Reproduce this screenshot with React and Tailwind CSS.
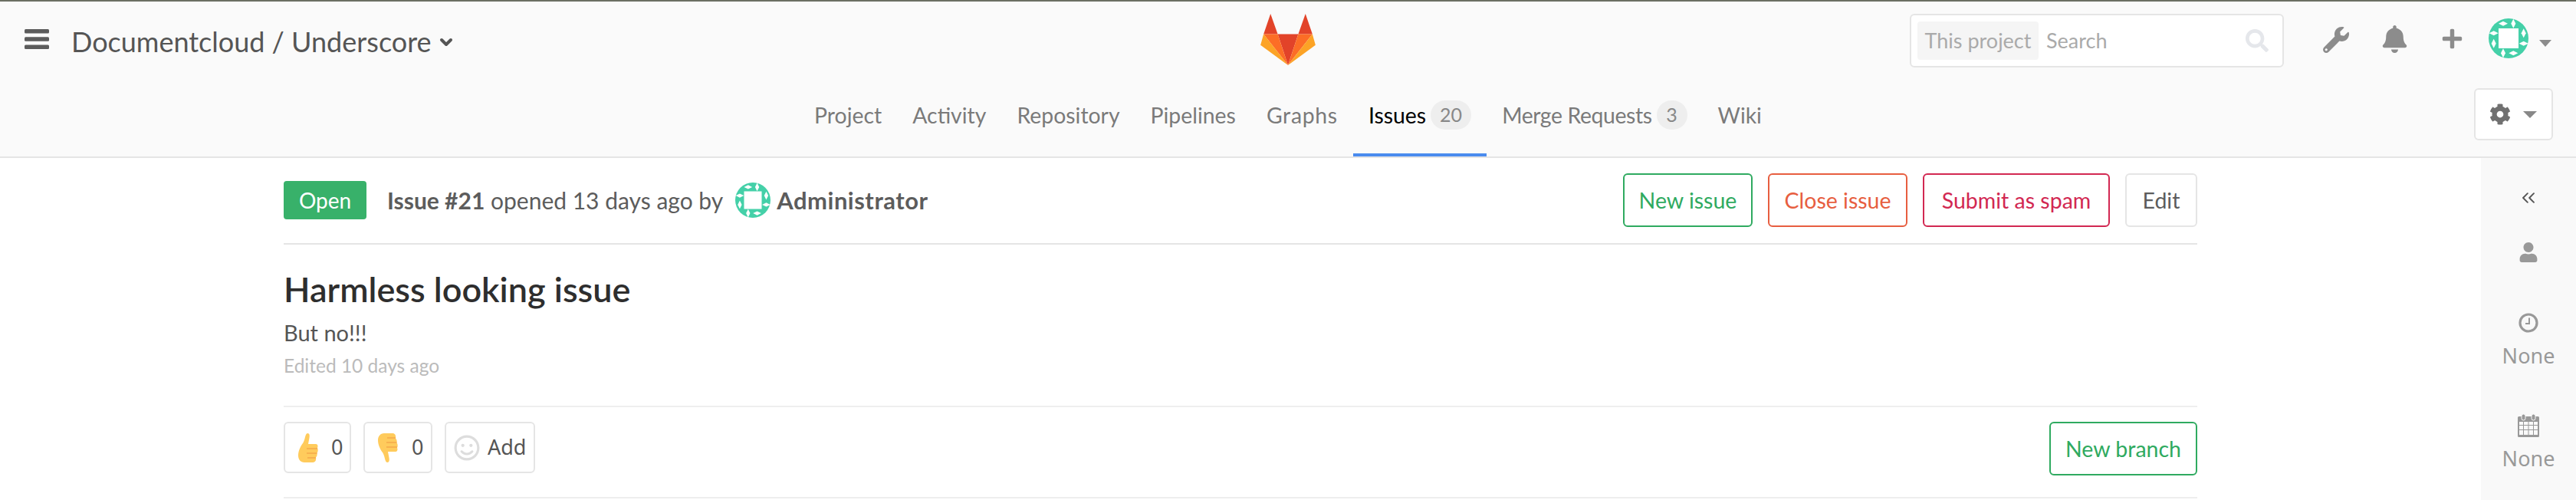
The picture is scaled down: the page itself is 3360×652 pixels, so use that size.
import { ChevronDown, ChevronsLeft } from 'lucide-react'
import { FaCog, FaUser, FaWrench, FaBell, FaPlus, FaSearch, FaRegSmile } from 'react-icons/fa'

const SANS = 'font-["Lato","Noto_Sans",sans-serif]'
const NOTO = 'font-["Noto_Sans",sans-serif]'

function Logo() {
  return (
    <svg viewBox="28 18 214 200" className="w-[72px] h-[67px]">
      <path d="M67 18 L95 97 H40 Z" fill="#e24329" />
      <path d="M203 18 L230 97 H175 Z" fill="#e24329" />
      <path d="M95 97 H175 L135 218 Z" fill="#e24329" />
      <path d="M40 97 H95 L135 218 Z" fill="#fc6d26" />
      <path d="M230 97 H175 L135 218 Z" fill="#fc6d26" />
      <path d="M40 97 L28 140 L135 218 Z" fill="#fca326" />
      <path d="M230 97 L242 140 L135 218 Z" fill="#fca326" />
    </svg>
  )
}

function Identicon({ className }) {
  const diamonds = [
    [19, 6.7, 6, 3], [32.3, 6.7, 3, 6], [45.7, 19.3, 3, 6], [45.7, 32.7, 6, 3],
    [32.3, 45.3, 6, 3], [19, 45.3, 3, 6], [6.7, 32.7, 3, 6], [6.7, 19.3, 6, 3],
  ]
  return (
    <svg viewBox="0 0 52 52" className={className}>
      <circle cx="26" cy="26" r="26" fill="#44d0a8" />
      <rect x="13" y="13" width="26" height="26" fill="#fff" />
      {diamonds.map(([x, y, rx, ry]) => (
        <path key={`${x}-${y}`} d={`M${x} ${y - ry} L${x + rx} ${y} L${x} ${y + ry} L${x - rx} ${y} Z`} fill="#fff" />
      ))}
    </svg>
  )
}

function ThumbUp() {
  return (
    <svg viewBox="0 0 26 38" className="w-[26px] h-[38px]">
      <path d="M12 0 C15 0 15 3 14.5 6 L13 14 L23 14 C25.5 14 26 17 25 19 C26 21 26 24 24.5 25.5 C25 28 24.5 30 23 31.5 C23.5 34 23 38 19 38 H8 C3 38 0 34 0 29 C0 23 3 17 6 13 C9 9 9 0 12 0 Z" fill="#ffcb5c" />
      <path d="M11 20 H25 M11 26 H24.5 M12 32 H23" stroke="#f5a94a" strokeWidth="1.5" fill="none" />
    </svg>
  )
}

function Clock() {
  return (
    <svg viewBox="0 0 26 26" className="mt-[66px] w-[26px] h-[26px]" fill="none" stroke="currentColor">
      <circle cx="13" cy="13" r="11" strokeWidth="3.2" />
      <path d="M14 6.5 V14 H9" strokeWidth="2" />
    </svg>
  )
}

function Calendar() {
  return (
    <svg viewBox="0 0 28 30" className="mt-[58px] w-[28px] h-[30px]" fill="currentColor">
      <path d="M1.5 3 H26.5 A1.5 1.5 0 0 1 28 4.5 V28.5 A1.5 1.5 0 0 1 26.5 30 H1.5 A1.5 1.5 0 0 1 0 28.5 V4.5 A1.5 1.5 0 0 1 1.5 3 Z" />
      <path d="M2 10 h5 v4 h-5 z M8 10 h5.5 v4 h-5.5 z M14.5 10 h5.5 v4 h-5.5 z M21 10 h5 v4 h-5 z M2 15 h5 v5 h-5 z M8 15 h5.5 v5 h-5.5 z M14.5 15 h5.5 v5 h-5.5 z M21 15 h5 v5 h-5 z M2 21 h5 v6 h-5 z M8 21 h5.5 v6 h-5.5 z M14.5 21 h5.5 v6 h-5.5 z M21 21 h5 v6 h-5 z" fill="#f9f9f9" />
      <rect x="5" y="0" width="5" height="8" rx="2.5" stroke="#f9f9f9" strokeWidth="1" />
      <rect x="18" y="0" width="5" height="8" rx="2.5" stroke="#f9f9f9" strokeWidth="1" />
    </svg>
  )
}

function Btn({ className, children }) {
  return (
    <button className={`h-[70px] border-2 rounded-md bg-white text-[28.5px] leading-none ${className}`}>
      {children}
    </button>
  )
}

const tabs = [
  { label: 'Project' },
  { label: 'Activity' },
  { label: 'Repository' },
  { label: 'Pipelines' },
  { label: 'Graphs', fit: 'tracking-[0.7px]' },
  { label: 'Issues', count: 20, active: true },
  { label: 'Merge Requests', count: 3, fit: 'tracking-[-0.4px]' },
  { label: 'Wiki' },
]

export default function App() {
  return (
    <div className={`h-[652px] w-[3360px] overflow-hidden bg-white flex flex-col ${SANS}`}>
      <header className="h-[206px] shrink-0 bg-[#fafafa] border-t-2 border-t-[#6b6f63] border-b-2 border-b-[#e5e5e5] flex flex-col">
        <div className="h-[98px] shrink-0 grid grid-cols-[1fr_auto_1fr] pt-4">
          <div className="flex items-start pl-8 pt-[14px] text-[#555]">
            <svg viewBox="0 0 32 26" className="w-[32px] h-[26px] mt-[6px]" fill="#5c5c5c">
              <rect width="32" height="5.5" rx="1.5" />
              <rect y="10.2" width="32" height="5.5" rx="1.5" />
              <rect y="20.5" width="32" height="5.5" rx="1.5" />
            </svg>
            <span className="ml-[29px] text-[36px] leading-[44px]">Documentcloud / Underscore</span>
            <ChevronDown className="ml-[7px] mt-[11px] w-6 h-6" strokeWidth={4} />
          </div>
          <Logo />
          <div className="flex items-start justify-end pr-8">
            <div className="w-[488px] h-[70px] border-2 border-[#e5e5e5] rounded-md bg-white flex items-center px-2 text-[#aaa] text-[27px]">
              <span className="h-[50px] w-[158px] bg-[#f5f5f5] rounded flex items-center justify-center">This project</span>
              <span className="ml-[10px]">Search</span>
              <FaSearch className="ml-auto mr-[10px] w-[30px] h-[30px] text-[#e5e7eb]" />
            </div>
            <FaWrench className="ml-[51px] mt-[17px] w-[34px] h-[34px] text-[#8c8c8c]" />
            <FaBell className="ml-[42px] mt-[15px] w-[35px] h-[36px] text-[#8c8c8c]" />
            <FaPlus className="ml-[43px] mt-[18px] w-[29px] h-[29px] text-[#8c8c8c]" />
            <Identicon className="ml-[33px] mt-[6px] w-[52px] h-[52px]" />
            <span className="ml-[14px] mt-[34px] w-0 h-0 border-x-[8px] border-x-transparent border-t-[9px] border-t-[#8c8c8c]" />
          </div>
        </div>
        <div className="flex-1 grid grid-cols-[1fr_auto_1fr]">
          <div />
          <nav className="flex items-stretch">
            {tabs.map(({ label, count, active, fit }) => (
              <a
                key={label}
                className={`flex items-center px-5 text-[28.4px] border-b-4 ${fit ?? ''} ${active ? 'text-black border-[#4a8bee]' : 'text-[#7a7a7a] border-transparent'}`}
              >
                {label}
                {count != null && (
                  <span className="ml-[6px] h-[38px] min-w-[40px] px-3 rounded-full bg-[#eee] text-[#888] text-[25px] tracking-normal flex items-center justify-center">{count}</span>
                )}
              </a>
            ))}
          </nav>
          <div className="flex justify-end pr-[30px] pt-[15px]">
            <button className="w-[103px] h-[68px] bg-white border-2 border-[#e5e5e5] rounded-md flex items-center pl-[18px]">
              <FaCog className="w-[28px] h-[28px] text-[#707070]" />
              <span className="ml-[16px] w-0 h-0 border-x-[9px] border-x-transparent border-t-[9px] border-t-[#888]" />
            </button>
          </div>
        </div>
      </header>

      <div className="flex-1 flex min-h-0">
        <main className="flex-1 px-[370px] pt-[20px]">
          <div className="h-[93px] border-b-2 border-[#e5e5e5] flex items-start">
            <span className="mt-[10px] w-[108px] h-[50px] rounded bg-[#38b16a] text-white text-[28px] flex items-center justify-center">Open</span>
            <span className="mt-[15px] ml-[27px] text-[30px] leading-[40px] text-[#5c5c5c]">
              <b className="font-bold">Issue #21</b> opened 13 days ago by
            </span>
            <Identicon className="mt-[12px] ml-[16px] w-[46px] h-[46px]" />
            <b className="mt-[15px] ml-[8px] text-[31px] tracking-[0.5px] leading-[40px] font-bold text-[#5c5c5c]">Administrator</b>
            <div className="ml-auto flex gap-5">
              <Btn className="w-[169px] border-[#2faa60] text-[#2faa60]">New issue</Btn>
              <Btn className="w-[182px] border-[#e75e40] text-[#e75e40]">Close issue</Btn>
              <Btn className="w-[244px] border-[#d22852] text-[#d22852]">Submit as spam</Btn>
              <Btn className="w-[94px] border-[#e5e5e5] text-[#5c5c5c]">Edit</Btn>
            </div>
          </div>
          <h1 className="mt-[30px] text-[45px] leading-[56px] font-semibold text-[#2e2e2e]">Harmless looking issue</h1>
          <p className="mt-[11px] text-[29px] leading-[36px] text-[#555]">But no!!!</p>
          <p className="mt-[9px] text-[24.5px] leading-[32px] text-[#bbb]">Edited 10 days ago</p>
          <div className="mt-[36px] h-[121px] border-y-2 border-[#eee] flex items-start pt-[19px] justify-between">
            <div className={`flex gap-4 text-[27px] text-[#555] ${NOTO}`}>
              <button className="w-[88px] h-[67px] border-2 border-[#e5e5e5] rounded-md flex items-center pl-[17px]">
                <ThumbUp />
                <span className="ml-[17px]">0</span>
              </button>
              <button className="w-[90px] h-[67px] border-2 border-[#e5e5e5] rounded-md flex items-center pl-[17px]">
                <span className="-scale-y-100 flex"><ThumbUp /></span>
                <span className="ml-[18px]">0</span>
              </button>
              <button className="w-[118px] h-[67px] border-2 border-[#e5e5e5] rounded-md flex items-center pl-[10px]">
                <FaRegSmile className="w-[34px] h-[34px] text-[#ddd]" />
                <span className="ml-[10px]">Add</span>
              </button>
            </div>
            <Btn className="w-[193px] h-[69px] border-[#2faa60] text-[#2faa60]">New branch</Btn>
          </div>
        </main>
        <aside className={`w-[124px] shrink-0 bg-[#f9f9f9] flex flex-col items-center text-[#999] text-[27px] ${NOTO}`}>
          <ChevronsLeft className="mt-[38px] w-[28px] h-[28px] text-[#555]" strokeWidth={1.6} />
          <FaUser className="mt-[44px] w-[26px] h-[26px]" />
          <Clock />
          <span className="mt-[12px] leading-[36px]">None</span>
          <Calendar />
          <span className="mt-[10px] leading-[36px]">None</span>
        </aside>
      </div>
    </div>
  )
}
